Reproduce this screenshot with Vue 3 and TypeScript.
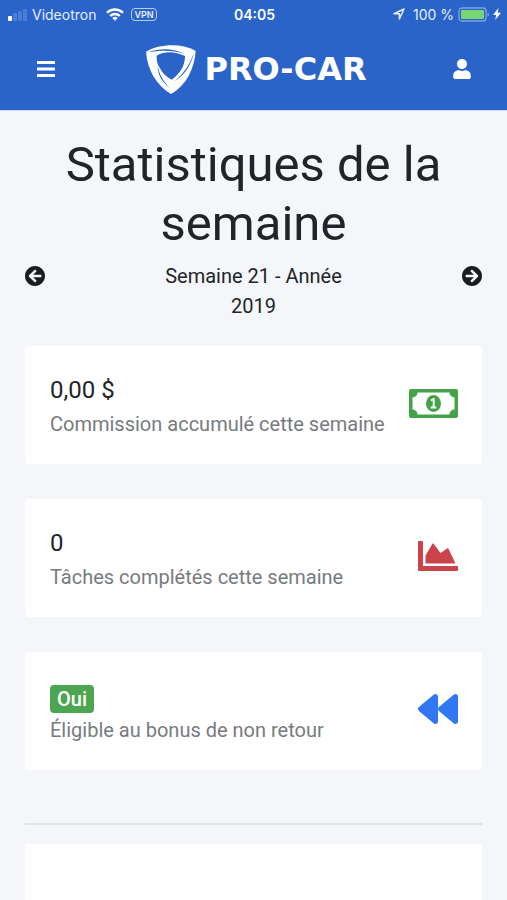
<script setup lang="ts">
interface Stat {
  id: string
  value: string
  label: string
  badge: boolean
}

const year = 2019
const week = 21

const stats: Stat[] = [
  { id: 'commission', value: '0,00 $', label: 'Commission accumulé cette semaine', badge: false },
  { id: 'tasks', value: '0', label: 'Tâches complétés cette semaine', badge: false },
  { id: 'bonus', value: 'Oui', label: 'Éligible au bonus de non retour', badge: true },
]
</script>

<template>
  <div class="page">
    <header class="top">
      <div class="status">
        <div class="status-side">
          <svg class="signal" viewBox="0 0 20 14" aria-hidden="true">
            <rect x="0" y="9" width="4" height="5" rx="1" fill="#fff" />
            <rect x="5" y="6" width="4" height="8" rx="1" fill="#4b7dd5" />
            <rect x="10" y="4" width="4" height="10" rx="1" fill="#4b7dd5" />
            <rect x="15" y="2" width="4" height="12" rx="1" fill="#4b7dd5" />
          </svg>
          <span class="carrier">Videotron</span>
          <svg class="wifi" viewBox="0 0 18 13" aria-hidden="true">
            <g fill="none" stroke="#fff" stroke-width="2.3">
              <path d="M1 4.800a11.300 11.300 0 0 1 16 0" />
              <path d="M4.200 8a6.800 6.800 0 0 1 9.600 0" />
            </g>
            <path d="M9 12.800l-2.700-2.700a3.800 3.800 0 0 1 5.400 0z" fill="#fff" />
          </svg>
          <span class="vpn">VPN</span>
        </div>
        <span class="clock">04:05</span>
        <div class="status-side status-end">
          <svg class="location" viewBox="0 0 12 12" aria-hidden="true">
            <path d="M1 5.700L11 1 6.400 11V5.700z" fill="none" stroke="#e4edfd" stroke-width="1.500" stroke-linejoin="round" />
          </svg>
          <span class="level">100 %</span>
          <svg class="battery" viewBox="0 0 32 15" aria-hidden="true">
            <rect x="1" y="1" width="27" height="13" rx="3" fill="none" stroke="#7fa3e2" stroke-width="1.300" />
            <rect x="3" y="3" width="23" height="9" rx="1" fill="#76d672" />
            <path d="M29.500 5.500c2 .5 2 3.500 0 4z" fill="#7fa3e2" />
          </svg>
          <svg class="bolt" viewBox="0 0 8 12" aria-hidden="true">
            <path d="M5.500 0L0 7h3.200L2.200 12 8 4.800H4.700z" fill="#fff" />
          </svg>
        </div>
      </div>

      <nav class="bar">
        <button class="icon-button" type="button" aria-label="Menu">
          <svg class="bars" viewBox="0 0 18 16">
            <g fill="#fff">
              <rect width="18" height="3" rx=".5" />
              <rect y="6.500" width="18" height="3" rx=".5" />
              <rect y="13" width="18" height="3" rx=".5" />
            </g>
          </svg>
        </button>
        <a class="brand" href="#">
          <svg class="shield" viewBox="0 0 150 147" aria-hidden="true">
            <path d="M0 20C42-4 104-6 149 17C146 69 121 121 75 147C31 120 4 75 0 20z" fill="#fff" />
            <path d="M32 32C58 17 88 20 117 33C117 62 104 84 77 104C62 97 50 86 42 70C34 58 31 46 32 32z" fill="#2a64c8" />
            <path d="M5 22C43 8 84 10 117 27C82 15 42 15 5 22z" fill="#2a64c8" />
            <path d="M144 22C137 58 118 88 86 109C114 84 133 58 144 22z" fill="#2a64c8" />
            <path d="M35 62C40 88 51 108 71 128C48 111 35 90 35 62z" fill="#2a64c8" />
          </svg>
          <span class="wordmark">PRO-CAR</span>
        </a>
        <button class="icon-button" type="button" aria-label="Profil">
          <svg class="user" viewBox="0 0 448 512">
            <path d="M224 256c70.700 0 128-57.300 128-128S294.700 0 224 0 96 57.300 96 128s57.300 128 128 128zm89.600 32h-16.700c-22.200 10.200-46.900 16-72.900 16s-50.600-5.800-72.900-16h-16.700C60.200 288 0 348.200 0 422.400V464c0 26.500 21.500 48 48 48h352c26.500 0 48-21.500 48-48v-41.600c0-74.200-60.200-134.400-134.400-134.400z" fill="#fff" />
          </svg>
        </button>
      </nav>
    </header>

    <main class="content">
      <h1 class="title">Statistiques de la semaine</h1>

      <div class="week">
        <button class="arrow" type="button" aria-label="Semaine précédente">
          <svg viewBox="8 8 496 496">
            <path d="M256 504C119 504 8 393 8 256S119 8 256 8s248 111 248 248-111 248-248 248zm28.900-143.600L209.400 288H392c13.300 0 24-10.700 24-24v-16c0-13.300-10.700-24-24-24H209.400l75.500-72.400c9.700-9.300 9.900-24.800.4-34.300l-11-10.900c-9.400-9.400-24.600-9.400-33.900 0L107.700 239c-9.400 9.400-9.400 24.600 0 33.900l132.700 132.700c9.400 9.400 24.600 9.400 33.900 0l11-10.900c9.500-9.500 9.300-25-.4-34.300z" />
          </svg>
        </button>
        <p class="week-name">Semaine {{ week }} - Année {{ year }}</p>
        <button class="arrow arrow-next" type="button" aria-label="Semaine suivante">
          <svg viewBox="8 8 496 496">
            <path d="M256 8c137 0 248 111 248 248S393 504 256 504 8 393 8 256 119 8 256 8zm-28.900 143.600l75.500 72.400H120c-13.300 0-24 10.700-24 24v16c0 13.300 10.700 24 24 24h182.600l-75.500 72.400c-9.700 9.300-9.900 24.800-.4 34.300l11 10.900c9.400 9.400 24.600 9.400 33.900 0L404.300 273c9.400-9.400 9.400-24.600 0-33.900L271.600 106.300c-9.400-9.400-24.600-9.400-33.900 0l-11 10.900c-9.500 9.600-9.300 25.100.4 34.400z" />
          </svg>
        </button>
      </div>

      <section class="cards">
        <article v-for="stat in stats" :key="stat.id" class="card">
          <div class="card-text">
            <div class="value">
              <span :class="{ badge: stat.badge }">{{ stat.value }}</span>
            </div>
            <p class="label">{{ stat.label }}</p>
          </div>
          <div class="card-icon">
            <svg v-if="stat.id === 'commission'" class="bill" viewBox="0 0 49 29" aria-hidden="true">
              <path fill-rule="evenodd" d="M2 0h45a2 2 0 0 1 2 2v25a2 2 0 0 1-2 2H2a2 2 0 0 1-2-2V2a2 2 0 0 1 2-2zM8.500 3.500a5 5 0 0 1-5 5v12a5 5 0 0 1 5 5h32a5 5 0 0 1 5-5v-12a5 5 0 0 1-5-5z" fill="#45a249" />
              <ellipse cx="24.500" cy="14.500" rx="7.500" ry="8.500" fill="#45a249" />
              <path d="M22 11.500l2.700-1.500v8.500M21.700 18.500h5.600" fill="none" stroke="#fff" stroke-width="2" stroke-linejoin="round" />
            </svg>
            <svg v-else-if="stat.id === 'tasks'" class="glyph" viewBox="0 0 512 512" aria-hidden="true">
              <path fill="#cb444a" d="M500 384c6.600 0 12 5.400 12 12v40c0 6.600-5.400 12-12 12H12c-6.600 0-12-5.400-12-12V76c0-6.600 5.400-12 12-12h40c6.600 0 12 5.400 12 12v308h436zM372.700 159.500L288 216l-85.300-113.700c-5.100-6.800-15.500-6.300-19.900 1L96 248v104h384l-89.900-187.800c-3.200-6.500-11.400-8.700-17.400-4.700z" />
            </svg>
            <svg v-else class="glyph" viewBox="0 0 512 512" aria-hidden="true">
              <path fill="#3176f3" d="M11.500 280.600l192 160c20.600 17.200 52.500 2.800 52.500-24.600V96c0-27.400-31.900-41.800-52.500-24.600l-192 160c-15.300 12.800-15.300 36.400 0 49.200zm256 0l192 160c20.600 17.200 52.500 2.800 52.500-24.600V96c0-27.400-31.900-41.800-52.500-24.600l-192 160c-15.300 12.800-15.300 36.400 0 49.200z" />
            </svg>
          </div>
        </article>
      </section>

      <hr class="rule" />
      <section class="panel"></section>
    </main>
  </div>
</template>

<style>
body {
  margin: 0;
  background: #f4f6fa;
}
</style>

<style scoped>
.page {
  display: flex;
  flex-direction: column;
  min-height: 100vh;
  color: #212529;
  background: #f4f6fa;
  font-family: Roboto, "Liberation Sans", sans-serif;
  font-size: 20px;
}

svg {
  display: block;
  flex: none;
}

button {
  padding: 0;
  border: 0;
  background: none;
  color: inherit;
  cursor: pointer;
}

.top {
  color: #fff;
  background: #2a64c8;
  border-bottom: 1px solid #d5dff1;
}

.status {
  display: grid;
  grid-template-columns: 1fr auto 1fr;
  align-items: center;
  height: 28px;
  padding: 0 6px 0 8px;
  font-family: Inter, Roboto, sans-serif;
  font-size: 14px;
}

.status-side {
  display: flex;
  align-items: center;
  color: #e4edfd;
}

.status-end {
  justify-content: flex-end;
}

.signal {
  width: 20px;
  height: 14px;
  margin-right: 4px;
}

.wifi {
  width: 18px;
  height: 13px;
  margin: 0 7px 0 10px;
}

.vpn {
  padding: 0 2px;
  border: 1px solid #b8cdf2;
  border-radius: 4px;
  font-size: 9px;
  font-weight: 600;
  line-height: 11px;
}

.clock {
  font-weight: 600;
}

.location {
  width: 12px;
  height: 12px;
  margin-right: 8px;
}

.battery {
  width: 32px;
  height: 15px;
  margin: 0 3px 0 4px;
}

.bolt {
  width: 8px;
  height: 12px;
}

.bar {
  display: flex;
  align-items: center;
  justify-content: space-between;
  height: 82px;
  padding: 0 25px;
}

.icon-button {
  display: grid;
  place-items: center;
  width: 41px;
  height: 41px;
}

.bars {
  width: 18px;
  height: 16px;
}

.user {
  width: 18px;
  height: 20px;
}

.brand {
  display: flex;
  align-items: center;
  gap: 8px;
  padding-left: 6px;
  color: #fff;
  text-decoration: none;
}

.shield {
  width: 50px;
  height: 49px;
}

.wordmark {
  font-family: "DejaVu Sans", sans-serif;
  font-size: 32px;
  font-weight: 700;
  line-height: 36px;
}

.content {
  display: flex;
  flex: 1;
  flex-direction: column;
  padding: 24px 25px 0;
}

.title {
  margin: 0 0 8px;
  font-size: 49px;
  font-weight: 400;
  line-height: 59px;
  text-align: center;
}

.week {
  display: grid;
  grid-template-columns: 1fr 2fr 1fr;
  align-items: start;
}

.arrow {
  justify-self: start;
  padding: 5px 0;
}

.arrow svg {
  width: 20px;
  height: 20px;
  fill: #1a1c20;
}

.arrow-next {
  justify-self: end;
}

.week-name {
  margin: 0;
  padding: 0 15px;
  line-height: 30px;
  text-align: center;
}

.cards {
  display: flex;
  flex-direction: column;
  gap: 35px;
  margin-top: 25px;
}

.card {
  display: flex;
  align-items: center;
  justify-content: space-between;
  padding: 25px 24px 25px 25px;
  border-radius: 4px;
  background: #fff;
}

.card-icon {
  padding-bottom: 4px;
}

.value {
  font-size: 24px;
  line-height: 38px;
}

.badge {
  display: block;
  width: max-content;
  margin-top: 8px;
  margin-bottom: 2px;
  padding: 0 7px;
  border-radius: 4px;
  color: #fff;
  background: #4ca550;
  font-size: 20px;
  font-weight: 500;
  line-height: 28px;
}

.label {
  margin: 0;
  color: #777b80;
  line-height: 30px;
}

.bill {
  width: 49px;
  height: 29px;
}

.glyph {
  width: 40px;
  height: 40px;
}

.rule {
  width: 100%;
  margin: 53px 0 19px;
  border: 0;
  border-top: 2px solid #e1e3e8;
}

.panel {
  flex: 1;
  min-height: 56px;
  background: #fff;
}
</style>
